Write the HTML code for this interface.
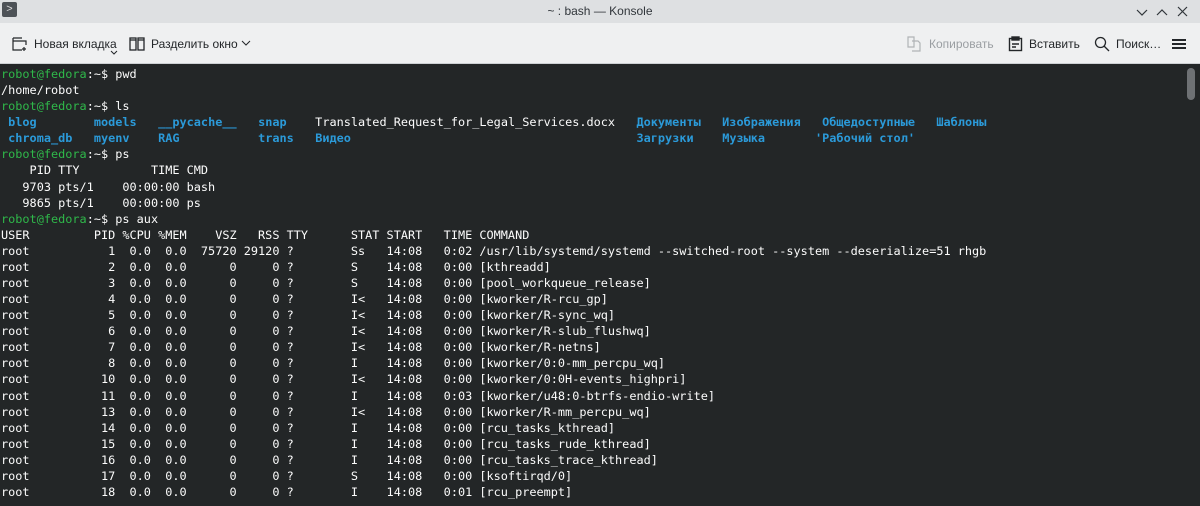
<!DOCTYPE html>
<html><head><meta charset="utf-8">
<style>
*{margin:0;padding:0;box-sizing:border-box}
body{width:1200px;height:506px;overflow:hidden;background:#232627;font-family:"Liberation Sans","DejaVu Sans",sans-serif;position:relative}
#title{position:absolute;left:0;top:0;width:1200px;height:23px;background:#dee0e2;}
#title .t{position:absolute;width:100%;text-align:center;top:4px;font-size:12px;color:#31363b}
#tb{position:absolute;left:0;top:23px;width:1200px;height:41px;background:#eff0f1;border-bottom:1px solid #cdd0d3}
.it{position:absolute;top:14px;font-size:12px;color:#232629;line-height:14px}
pre{position:absolute;left:1px;top:66px;font-family:"DejaVu Sans Mono","Liberation Mono",monospace;font-size:11.86px;line-height:16.08px;color:#fcfcfc}
.g{color:#2fb84a}.b{color:#2b9ad9;font-weight:bold}
#sb{position:absolute;left:1187px;top:68px;width:8px;height:32px;border-radius:4px;background:#6e7174}
</style></head><body>
<div id="title">
<div style="position:absolute;left:2px;top:2px;width:15px;height:15px;background:#4d5257;border-radius:2px;color:#ddd;font-size:11px;line-height:15px;text-align:center">&gt;</div>
<div class="t">~ : bash — Konsole</div>
<svg style="position:absolute;left:1135px;top:5px" width="60" height="14" fill="none" stroke="#31363b" stroke-width="1.2"><path d="M2 5l5 5 5-5"/><path d="M22 10l5-5 5 5"/><path d="M43 2l9 9M52 2l-9 9"/></svg>
</div>
<div id="tb">
<svg style="position:absolute;left:12px;top:13px" width="16" height="16" fill="none" stroke="#232629" stroke-width="1.2"><path d="M1 2h9M1 2v12h9M1 5h13v4M12 11v4M10 13h4"/></svg>
<div class="it" style="left:34px">Новая вкладка</div>
<svg style="position:absolute;left:110px;top:27px" width="8" height="6" fill="none" stroke="#232629"><path d="M1 1l3 3 3-3"/></svg>
<svg style="position:absolute;left:129px;top:13px" width="16" height="16" fill="none" stroke="#232629" stroke-width="1.3"><rect x="1" y="2" width="6" height="12"/><rect x="9" y="2" width="6" height="12"/><path d="M1 4h6M9 4h6"/></svg>
<div class="it" style="left:151px">Разделить окно</div>
<svg style="position:absolute;left:241px;top:17px" width="10" height="7" fill="none" stroke="#232629"><path d="M1 1l4 4 4-4"/></svg>
<svg style="position:absolute;left:906px;top:13px" width="16" height="16" fill="none" stroke="#b0b3b6" stroke-width="1.2"><path d="M2 1h6v10H2zM6 5h6l2 2v8H6"/></svg>
<div class="it" style="left:929px;color:#9a9ea2">Копировать</div>
<svg style="position:absolute;left:1008px;top:13px" width="15" height="16" fill="none" stroke="#232629" stroke-width="1.4"><rect x="1.5" y="2.5" width="12" height="12"/><rect x="4" y="1" width="7" height="3" fill="#232629"/><path d="M4 8h7M4 11h4"/></svg>
<div class="it" style="left:1029px">Вставить</div>
<svg style="position:absolute;left:1094px;top:13px" width="16" height="16" fill="none" stroke="#232629" stroke-width="1.3"><circle cx="6.5" cy="6.5" r="5"/><path d="M10 10l5 5"/></svg>
<div class="it" style="left:1116px">Поиск…</div>
<svg style="position:absolute;left:1171px;top:15px" width="16" height="12" stroke="#232629" stroke-width="2"><path d="M1 2h14M1 6h14M1 10h14"/></svg>
</div>
<div id="sb"></div>
<pre><span class="g">robot@fedora</span>:~$ pwd
/home/robot
<span class="g">robot@fedora</span>:~$ ls
 <span class="b">blog</span>        <span class="b">models</span>   <span class="b">__pycache__</span>   <span class="b">snap</span>    Translated_Request_for_Legal_Services.docx   <span class="b">Документы</span>   <span class="b">Изображения</span>   <span class="b">Общедоступные</span>   <span class="b">Шаблоны</span>
 <span class="b">chroma_db</span>   <span class="b">myenv</span>    <span class="b">RAG</span>           <span class="b">trans</span>   <span class="b">Видео</span>                                        <span class="b">Загрузки</span>    <span class="b">Музыка</span>       <span class="b">'Рабочий стол'</span>
<span class="g">robot@fedora</span>:~$ ps
    PID TTY          TIME CMD
   9703 pts/1    00:00:00 bash
   9865 pts/1    00:00:00 ps
<span class="g">robot@fedora</span>:~$ ps aux
USER         PID %CPU %MEM    VSZ   RSS TTY      STAT START   TIME COMMAND
root           1  0.0  0.0  75720 29120 ?        Ss   14:08   0:02 /usr/lib/systemd/systemd --switched-root --system --deserialize=51 rhgb
root           2  0.0  0.0      0     0 ?        S    14:08   0:00 [kthreadd]
root           3  0.0  0.0      0     0 ?        S    14:08   0:00 [pool_workqueue_release]
root           4  0.0  0.0      0     0 ?        I&lt;   14:08   0:00 [kworker/R-rcu_gp]
root           5  0.0  0.0      0     0 ?        I&lt;   14:08   0:00 [kworker/R-sync_wq]
root           6  0.0  0.0      0     0 ?        I&lt;   14:08   0:00 [kworker/R-slub_flushwq]
root           7  0.0  0.0      0     0 ?        I&lt;   14:08   0:00 [kworker/R-netns]
root           8  0.0  0.0      0     0 ?        I    14:08   0:00 [kworker/0:0-mm_percpu_wq]
root          10  0.0  0.0      0     0 ?        I&lt;   14:08   0:00 [kworker/0:0H-events_highpri]
root          11  0.0  0.0      0     0 ?        I    14:08   0:03 [kworker/u48:0-btrfs-endio-write]
root          13  0.0  0.0      0     0 ?        I&lt;   14:08   0:00 [kworker/R-mm_percpu_wq]
root          14  0.0  0.0      0     0 ?        I    14:08   0:00 [rcu_tasks_kthread]
root          15  0.0  0.0      0     0 ?        I    14:08   0:00 [rcu_tasks_rude_kthread]
root          16  0.0  0.0      0     0 ?        I    14:08   0:00 [rcu_tasks_trace_kthread]
root          17  0.0  0.0      0     0 ?        S    14:08   0:00 [ksoftirqd/0]
root          18  0.0  0.0      0     0 ?        I    14:08   0:01 [rcu_preempt]</pre>
</body></html>
